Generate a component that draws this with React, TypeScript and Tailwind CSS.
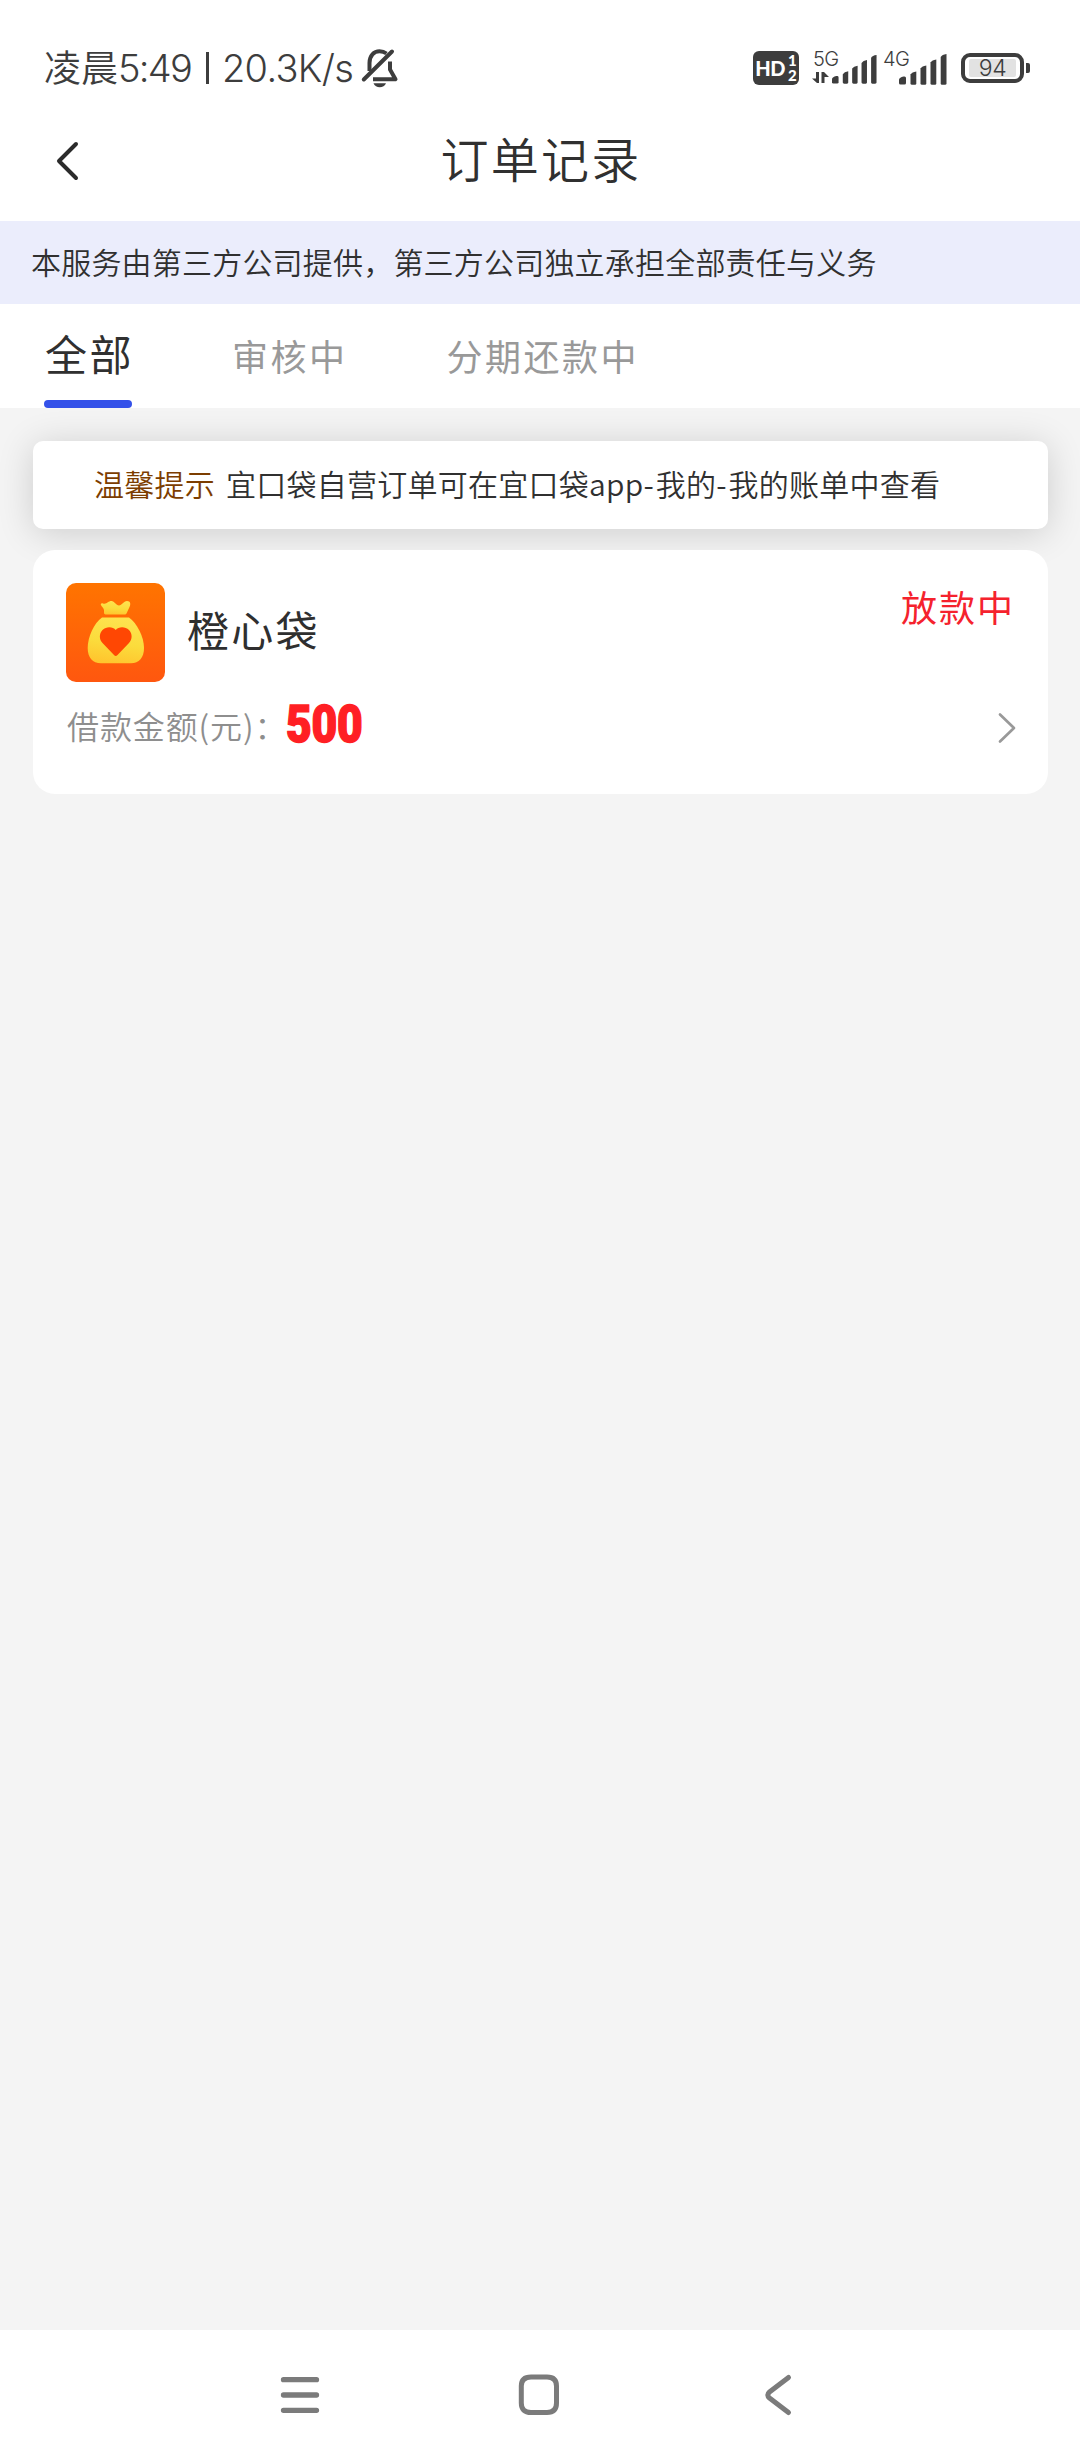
import type { ReactNode } from "react";

const tabs = [
  { label: "审核中", className: "ml-[100px]" },
  { label: "分期还款中", className: "ml-[99px]" },
];

function MutedBell() {
  return (
    <svg width="40" height="42" viewBox="0 0 40 42" fill="none" stroke="#3d3d3d" strokeWidth="4" className="mt-[2px] shrink-0">
      <path d="M9.5 24V16C9.5 8.500 14 4.300 19.500 4.300C22.500 4.300 24.500 5 26.500 6.500" />
      <path d="M3.800 32.500L32 4.500" strokeLinecap="round" />
      <path d="M30 14.500V22.500L35.500 32.300H13" strokeLinejoin="round" />
      <path d="M13.500 36.300H26C25 39 22.500 40.200 19.700 40.200C17 40.200 14.500 39 13.500 36.300Z" fill="#3d3d3d" stroke="none" />
    </svg>
  );
}

function SignalBars() {
  return (
    <svg width="48" height="32" viewBox="0 0 48 32" fill="#3d3d3d">
      <path d="M0 30V27C0 25 3 23.500 5.500 23.500Q7 23.500 7 25V30Q7 31.500 5.500 31.500H1.500Q0 31.500 0 30Z" />
      <path d="M11.500 21.500Q13 19 17.300 18.500V30.500Q17.300 31.700 16 31.700H13Q11.500 31.700 11.500 30.500Z" />
      <path d="M21.500 15.500Q23 13 27.300 12.500V30.500Q27.300 31.700 26 31.700H23Q21.500 31.700 21.500 30.500Z" />
      <path d="M31.500 9.500Q33 7 37.300 6.500V30.500Q37.300 31.700 36 31.700H33Q31.500 31.700 31.500 30.500Z" />
      <path d="M41.700 4Q43 1.500 47.500 1V30.500Q47.500 31.700 46 31.700H43Q41.700 31.700 41.700 30.500Z" />
    </svg>
  );
}

function Network({ name, children }: { name: string; children?: ReactNode }) {
  return (
    <div className="relative flex h-[34px] w-[70px] items-end justify-end pr-[5px]">
      <span className="absolute -top-[4px] left-[1px] font-['Inter'] text-[20px] leading-[24px] font-light tracking-[-0.7px]">{name}</span>
      {children}
      <SignalBars />
    </div>
  );
}

function StatusBar() {
  return (
    <div className="flex h-[100px] items-end justify-between pr-[50px] pb-[14px] pl-[44px] text-[#3d3d3d]">
      <div className="flex h-[38px] items-center">
        <span className="pb-[2px] text-[37px] leading-[38px] font-[350]">凌晨</span>
        <div className="flex w-[242px] items-center pt-[2px] font-['Inter'] text-[38px] leading-[38px] font-light">
          <span className="w-[88px] tracking-[-1.7px]">5:49</span>
          <span className="h-[32px] w-[3px] bg-[#3d3d3d]" />
          <span className="ml-[13px] tracking-[-0.7px]">20.3K/s</span>
        </div>
        <MutedBell />
      </div>
      <div className="flex h-[36px] items-center">
        <div className="mr-[13px] flex h-[34px] w-[46px] items-center justify-center gap-[3px] rounded-[6px] bg-[#3d3d3d] font-['Lato'] font-black text-white">
          <span className="text-[20px] leading-none tracking-[-0.5px]">HD</span>
          <span className="flex flex-col text-[15px] leading-[15px]">
            <span>1</span>
            <span>2</span>
          </span>
        </div>
        <Network name="5G">
          <svg width="17" height="12" viewBox="0 0 17 12" fill="#3d3d3d" className="mr-[3px] mb-px shrink-0">
            <path d="M4 0H7V11H5L0 6.500H4Z" />
            <path d="M9.500 0H12L17 5H12.500V11H9.500Z" />
          </svg>
        </Network>
        <Network name="4G" />
        <div className="ml-[9px] flex h-[30px] w-[63px] items-center justify-center rounded-[9px] border-4 border-[#3d3d3d]">
          <span className="flex h-[18px] w-[47px] items-center justify-center rounded-[2px] bg-[#e2e2e2] pt-px font-['Inter'] text-[23px] leading-none font-light tracking-[-0.5px]">94</span>
        </div>
        <div className="ml-[2px] h-[10px] w-1 rounded-r-[2px] bg-[#3d3d3d]" />
      </div>
    </div>
  );
}

function MoneyBag() {
  return (
    <svg width="99" height="99" viewBox="0 0 99 99" className="rounded-[10px]">
      <defs>
        <linearGradient id="tile" x1="0" y1="0" x2="0" y2="1">
          <stop offset="0" stopColor="#ff7400" />
          <stop offset="1" stopColor="#ff570f" />
        </linearGradient>
        <linearGradient id="bag" x1="0.600" y1="0" x2="0.400" y2="1">
          <stop offset="0" stopColor="#fee350" />
          <stop offset="0.550" stopColor="#fbdc3c" />
          <stop offset="1" stopColor="#ffc52e" />
        </linearGradient>
      </defs>
      <rect width="99" height="99" fill="url(#tile)" />
      <path d="M35.500 23C34 21 35 20 37 20.500C41 21.500 42 18 45.500 18C48.500 18 50 22.500 53 22.500C56 22.500 57.500 18 61 18C64.500 18 65 21 63.500 24L60.500 30.500Q60 31.400 59 31.400H39.500Q38 31.400 38 30V27.500C38 25.500 36.500 24.500 35.500 23Z" fill="url(#bag)" />
      <path d="M36 34.500H63C71 40 78 54 78 65C78 74.500 73 80.300 65 80.300H35C26.500 80.300 21.700 74.500 21.700 65C21.700 54 28 40 36 34.500Z" fill="url(#bag)" />
      <path d="M49.700 47C47 43.500 40.500 43 36.500 47C33 50.500 33 56.500 36.500 60L48 72Q49.700 74 51.500 72L63 60C66.500 56.500 66.500 50.500 63 47C59 43 52.500 43.500 49.700 47Z" fill="#ff4703" />
    </svg>
  );
}

function OrderCard() {
  return (
    <div className="mt-[21px] h-[244px] rounded-[22px] bg-white pt-[33px] pr-[33px] pl-[33px]">
      <div className="flex">
        <MoneyBag />
        <h2 className="mt-[22px] ml-[22px] text-[42px] leading-[48px] font-normal tracking-[2.3px] text-[#2f2f2f]">橙心袋</h2>
        <span className="-mt-px ml-auto text-[36px] leading-[48px] tracking-[2px] text-[#f5222d]">放款中</span>
      </div>
      <div className="mt-[17px] flex h-[52px] items-center">
        <span className="ml-px text-[32px] leading-[44px] font-[350] tracking-[0.9px] text-[#8e8e8e]">借款金额(元)：</span>
        <span className="-ml-px origin-left scale-x-[0.87] font-['Roboto'] text-[51px] leading-[52px] font-black tracking-[-0.3px] text-[#ff1f24] [-webkit-text-stroke:1.5px_#ff1f24]">500</span>
        <svg width="20" height="32" viewBox="0 0 20 32" fill="none" stroke="#999" strokeWidth="2.700" className="mt-[6px] -mr-[2px] ml-auto">
          <path d="M3 2.500L17 16L3 29.500" strokeLinecap="round" strokeLinejoin="round" />
        </svg>
      </div>
    </div>
  );
}

export default function App() {
  return (
    <div className="flex h-[2460px] w-[1080px] flex-col overflow-hidden bg-[#f4f4f4] font-['Noto_Sans_CJK_SC',sans-serif] text-[#303030]">
      <div className="bg-white">
        <StatusBar />
        {/* Title bar */}
        <div className="grid h-[121px] grid-cols-[200px_1fr_200px] items-center">
          <svg width="28" height="42" viewBox="0 0 28 42" fill="none" stroke="#2b2b2b" strokeWidth="4" className="ml-[54px]">
            <path d="M22 4L5 21L22 38" strokeLinecap="round" strokeLinejoin="round" />
          </svg>
          <h1 className="pb-[8px] pl-[2px] text-center text-[48px] leading-[60px] font-[350] tracking-[2.2px]">订单记录</h1>
        </div>
      </div>

      <div className="flex h-[83px] items-center bg-[#ebedfc] pb-[3px] pl-[31px] text-[30px] font-[350] tracking-[0.2px]">
        本服务由第三方公司提供，第三方公司独立承担全部责任与义务
      </div>

      {/* Tabs */}
      <div className="flex h-[104px] bg-white pl-[44px]">
        <div className="flex w-[88px] flex-col justify-between">
          <span className="mt-[22px] ml-px text-[42px] leading-[54px] tracking-[2.5px] whitespace-nowrap">全部</span>
          <span className="h-2 rounded-full bg-[#3451e9]" />
        </div>
        {tabs.map((tab) => (
          <span key={tab.label} className={`mt-[27px] text-[36px] leading-[48px] tracking-[2.5px] text-[#999] ${tab.className}`}>
            {tab.label}
          </span>
        ))}
      </div>

      {/* Orders */}
      <main className="flex-1 pt-[33px] pr-[32px] pl-[33px]">
        <div className="flex h-[88px] items-center rounded-[10px] bg-white pb-[4px] pl-[61px] text-[30px] font-[350] tracking-[0.25px] shadow-[0_4px_36px_rgba(0,0,0,0.16)]">
          <span className="mr-[11px] text-[#7c3d00]">温馨提示</span>
          <span>
            宜口袋自营订单可在宜口袋app<span className="tracking-[2px]">-</span>我的<span className="tracking-[2px]">-</span>我的账单中查看
          </span>
        </div>
        <OrderCard />
      </main>

      {/* System navigation */}
      <nav className="flex h-[130px] items-center bg-white pl-[278px]">
        <svg width="44" height="44" viewBox="0 0 44 44" stroke="#7b7b7b" strokeWidth="5.300" strokeLinecap="round">
          <path d="M5.500 6.700H38.500M5.500 22H38.500M5.500 37.300H38.500" />
        </svg>
        <svg width="44" height="44" viewBox="0 0 44 44" fill="none" stroke="#7b7b7b" strokeWidth="5" className="ml-[195px]">
          <path d="M14 4H30Q39.500 4 39.500 13V30Q39.500 39.500 30 39.500H14Q4.300 39.500 4.300 30V13Q4.300 4 14 4Z" />
        </svg>
        <svg width="34" height="44" viewBox="0 0 34 44" fill="none" stroke="#7b7b7b" strokeWidth="5" className="ml-[199px]">
          <path d="M28.500 4.500L9.500 19Q6 22 9.500 25L28.500 39.500" strokeLinecap="round" />
        </svg>
      </nav>
    </div>
  );
}
